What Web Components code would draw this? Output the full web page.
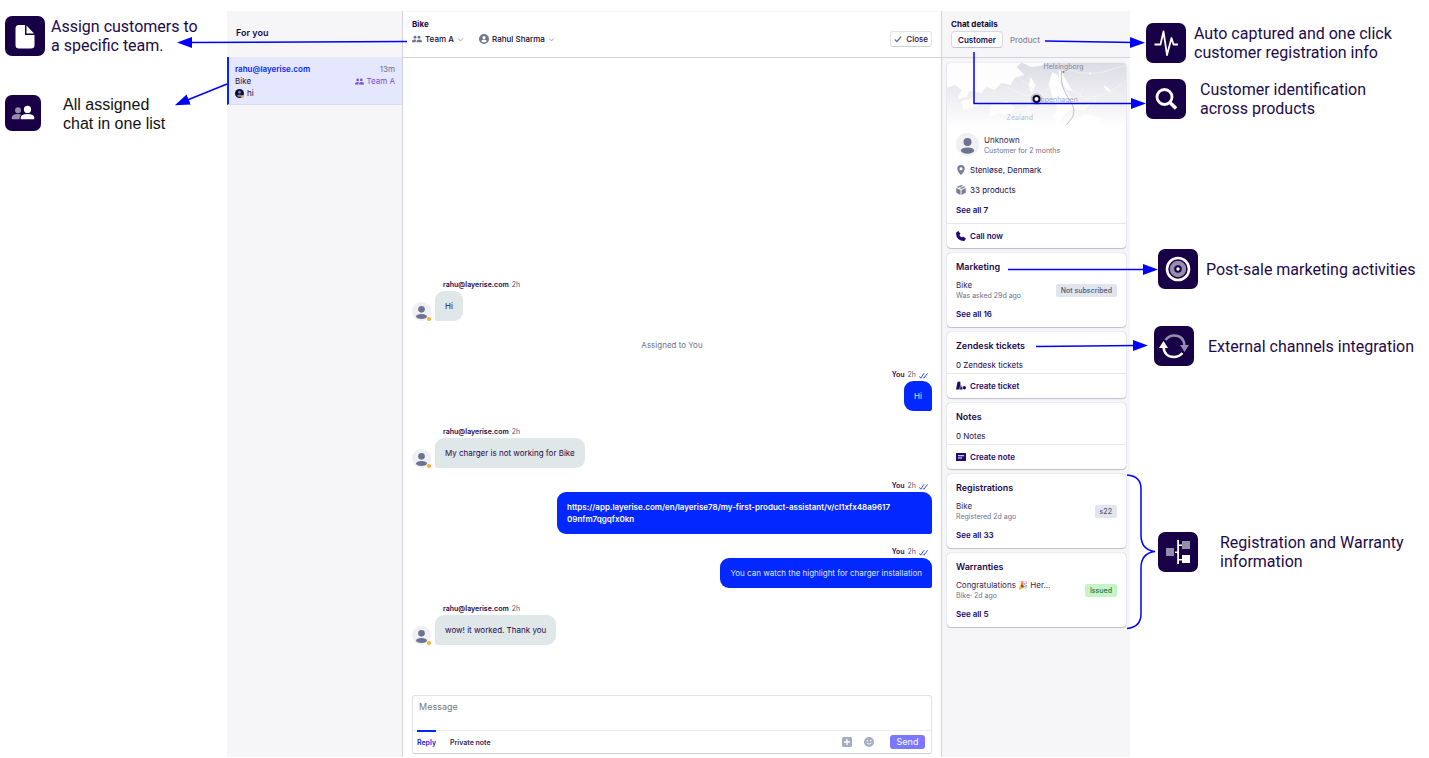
<!DOCTYPE html>
<html lang="en">
<head>
<meta charset="utf-8">
<meta name="viewport" content="width=device-width, initial-scale=1">
<title>Customer chat</title>
<style>
  :root {
    --ink: #1c0a4a;
    --muted: #6f7189;
    --blue: #0328ff;
    --arrow: #0000ff;
    --panel: #f6f6f9;
    --line: #d3d3da;
  }

  body {
    margin: 0;
    background: #fff;
    color: var(--ink);
    font: 8px/12px Inter, "Liberation Sans", sans-serif;
  }
</style>
</head>
<body>
<tour-page></tour-page>

<script>
const define = (name, html) => customElements.define(name, class extends HTMLElement {
  constructor() {
    super()
    this.attachShadow({ mode: 'open' })
    this.shadowRoot.innerHTML = typeof html === 'function' ? html(this) : html
  }
})

const attr = (el, name, fallback = '') => el.getAttribute(name) ?? fallback

const icons = {
  team: ['0 0 20 16', `<circle cx="6" cy="4.5" r="2.9"/><circle cx="14" cy="4.5" r="2.9"/><path d="M0 14.500v-2q0-3.500 6-3.500 1.500 0 2.600.3Q7.500 10.500 7.500 14.500zM9 14.500v-2q0-3.500 5.500-3.500t5.500 3.500v2z"/>`],
  user: ['0 0 20 20', `<path fill-rule="evenodd" d="M10 0a10 10 0 1 0 0 20 10 10 0 0 0 0-20zm0 4a3.200 3.200 0 1 1 0 6.400A3.200 3.200 0 0 1 10 4zm-5.500 10.500c0-4 11-4 11 0-2.500 3-8.500 3-11 0z"/>`],
  chevron: ['0 0 20 20', `<path d="M3 7l7 7 7-7" fill="none" stroke="currentColor" stroke-width="2.500"/>`],
  check: ['0 0 20 20', `<path d="M2 11l5 5L18 4" fill="none" stroke="currentColor" stroke-width="3.500"/>`],
  seen: ['0 0 20 16', `<path d="M1 10l3 4 7-11M9 12l2 2 8-11" fill="none" stroke="currentColor" stroke-width="1.800"/>`],
  pin: ['0 0 20 20', `<path fill-rule="evenodd" d="M10 0a7.500 7.500 0 0 0-7.500 7.500C2.500 13 10 20 10 20s7.500-7 7.500-12.500A7.500 7.500 0 0 0 10 0zm0 4.500a3 3 0 1 1 0 6 3 3 0 0 1 0-6z"/>`],
  box: ['0 0 20 20', `<path d="M10 0l4 1.600-9 4L1 4zM16 2.400L19 4l-9 4.200L7 6.700zM.5 6L9 9.800V20L.5 15.500zM19.500 6L11 9.800V20l8.500-4.500z"/>`],
  phone: ['0 0 20 20', `<path d="M1 2.500L5 0l4 6-2.200 2.200q1.500 3.500 5 5L14 11l6 4-2.500 4q-1 1-3 1Q1 18 0 5.500q0-2 1-3z"/>`],
  ticket: ['0 0 20 18', `<path d="M3 1q4-2 6 1L7 16H0z"/><path d="M9.500 5l3.500 11H8z"/><circle cx="16.500" cy="12.500" r="3.500"/>`],
  note: ['0 0 20 16', `<path fill-rule="evenodd" d="M1 0h18q1 0 1 1v14q0 1-1 1H1q-1 0-1-1V1q0-1 1-1zm3 4.500v2h12v-2zm0 4.500v2h8V9z"/>`],
  plus: ['0 0 20 20', `<path fill-rule="evenodd" d="M3 0h14q3 0 3 3v14q0 3-3 3H3q-3 0-3-3V3q0-3 3-3zm5.700 4v4.700H4v2.600h4.700V16h2.600v-4.700H16V8.700h-4.700V4z"/>`],
  smile: ['0 0 20 20', `<circle cx="10" cy="10" r="10"/><g fill="#fff"><circle cx="6.500" cy="7.500" r="1.500"/><circle cx="13.500" cy="7.500" r="1.500"/></g><path d="M5.500 12q4.500 5 9 0" fill="none" stroke="#fff" stroke-width="1.800"/>`],
  avatar: ['0 0 40 40', `<circle cx="20" cy="20" r="20" fill="#f0f0f3"/><g fill="#6c7390"><circle cx="20" cy="15.500" r="7"/><ellipse cx="20" cy="30.500" rx="11.500" ry="5.500"/></g>`],
  face: ['0 0 40 40', `<circle cx="20" cy="20" r="20" fill="#0d0d3a"/><g fill="#7d86a8"><circle cx="20" cy="14" r="6"/><path d="M9 31q0-7 11-7t11 7q-11 8-22 0z"/></g>`],
  // callout tiles
  file: ['0 0 40 40', `<path d="M14 9h6v10h9.500v10q0 3.500-3.500 3.500H14q-3.500 0-3.500-3.500V12.500Q10.500 9 14 9z"/><path d="M21.500 9.500L29 17.500h-7.500z"/>`],
  people: ['0 0 40 40', `<g opacity=".55"><circle cx="14.500" cy="17" r="3.300"/><path d="M7.500 27v-2q0-4 7-4 2 0 3.500.6-2 1.600-2 5.400z"/></g><circle cx="25" cy="16" r="4"/><path d="M17.500 27v-2q0-4 7.500-4t7.500 4v2z"/>`],
  pulse: ['0 0 40 40', `<path d="M8.500 21.500h6L17.500 8.500 21 32l4.500-17 2 6.500H32" fill="none" stroke="currentColor" stroke-width="1.800" stroke-linejoin="round"/>`],
  search: ['0 0 40 40', `<circle cx="18.500" cy="18" r="7.500" fill="none" stroke="currentColor" stroke-width="2.800"/><path d="M24 23.500l6 6" stroke="currentColor" stroke-width="3.500"/>`],
  target: ['0 0 40 40', `<circle cx="20" cy="20" r="11" fill="none" stroke="currentColor" stroke-width="2.600"/><circle cx="20" cy="20" r="6" fill="none" stroke="currentColor" stroke-width="4.500" opacity=".55"/><circle cx="20" cy="20" r="1.700"/>`],
  sync: ['0 0 40 40', `<g opacity=".55"><path d="M11.500 14Q15 9.500 20 9.500q9.500 0 10.500 10" fill="none" stroke="currentColor" stroke-width="2.500"/><path d="M26 19h9l-4.500 7z"/></g><path d="M28.500 27q-3.500 4-8.500 4-9.500 0-10.500-10" fill="none" stroke="currentColor" stroke-width="2.500"/><path d="M5 22h9l-4.500-7z"/>`],
  tree: ['0 0 40 40', `<path d="M19.200 8h1.800v24h-1.800z"/><path d="M17 19.500h3v1.600h-3zM21 12.500h3v1.600h-3zM21 27h3v1.600h-3z"/><path d="M24 23h8v8h-8z"/><path d="M24 9h8v8h-8zM8 16h8v8H8z" opacity=".55"/>`]
}

define('ui-icon', el => {
  const [viewBox, shapes] = icons[attr(el, 'name')]
  return `
<style>
  :host {
    display: inline-block;
    flex: none;
    width: var(--icon-size, 9px);
    height: var(--icon-size, 9px);
  }

  svg {
    display: block;
    width: 100%;
    height: 100%;
  }
</style>
<svg viewBox="${viewBox}" fill="currentColor" aria-hidden="true">${shapes}</svg>
`
})

define('user-avatar', el => `
<style>
  :host {
    position: relative;
    display: block;
    flex: none;
    --icon-size: var(--avatar-size, 19px);
  }

  ui-icon {
    display: block;
  }

  i {
    position: absolute;
    right: 0;
    bottom: 0;
    width: 4px;
    height: 4px;
    border-radius: 50%;
    background: #ffab2e;
  }

  :host([kind="face"]) i {
    width: 3px;
    height: 3px;
  }

  :host([plain]) i {
    display: none;
  }
</style>
<ui-icon name="${attr(el, 'kind', 'avatar')}"></ui-icon><i></i>
`)

define('help-callout', el => `
<style>
  :host {
    display: flex;
    align-items: flex-start;
    gap: var(--gap, 8px);
    margin-left: var(--indent, 0);
    color: #1e0a4a;
    font: 16px/19px Roboto, sans-serif;
  }

  .tile {
    flex: none;
    border-radius: 7px;
    background: #170046;
    color: #fff;
    --icon-size: var(--tile, 40px);
  }

  ui-icon {
    display: block;
  }

  p {
    margin: 0;
    align-self: center;
  }
</style>
<div class="tile"><ui-icon name="${attr(el, 'icon')}"></ui-icon></div>
<p><slot></slot></p>
`)

// Arrows between the callouts and the app; one drawing per side, pinned to that side
define('callout-arrows', el => `
<style>
  :host {
    position: absolute;
    top: 0;
    ${attr(el, 'side')}: 0;
    pointer-events: none;
  }

  svg {
    display: block;
  }
</style>
<svg width="500" height="700" fill="none" stroke="var(--arrow)" stroke-width="1.500" aria-hidden="true">
  <marker id="head" markerWidth="15" markerHeight="12" refX="4" refY="6" orient="auto" markerUnits="userSpaceOnUse">
    <path d="M0 0.500L15 6 0 11.500z" fill="var(--arrow)" stroke="none"/>
  </marker>
  ${attr(el, 'side') === 'left' ? `
  <path d="M407 41.500L188 42.500" marker-end="url(#head)"/>
  <path d="M227 84L185 101" marker-end="url(#head)"/>` : `
  <path d="M116 41L205 42.500" marker-end="url(#head)"/>
  <path d="M45 52V103.500H206" marker-end="url(#head)"/>
  <path d="M79 269.500H218" marker-end="url(#head)"/>
  <path d="M107 346.500L208 345.500" marker-end="url(#head)"/>
  <path d="M198 475Q212 476 212 489V535Q212 550 226 551.500Q212 553 212 568V614Q212 627 198 628.500"/>`}
</svg>
`)

define('inbox-item', el => `
<style>
  :host {
    display: block;
    padding: 6px 7px 5px 6px;
    border-left: 2px solid var(--blue);
    border-bottom: 1px solid #d9dbf3;
    background: #e5e7ff;
  }

  div {
    display: flex;
    align-items: center;
    justify-content: space-between;
  }

  b {
    color: var(--blue);
    font-weight: 600;
  }

  time {
    color: var(--muted);
  }

  .team {
    display: flex;
    align-items: center;
    gap: 2px;
    color: #7b4fd6;
  }

  .last {
    justify-content: flex-start;
    gap: 3px;
    --avatar-size: 9px;
  }
</style>
<div><b>${attr(el, 'from')}</b><time>${attr(el, 'time')}</time></div>
<div><span>${attr(el, 'subject')}</span><span class="team"><ui-icon name="team"></ui-icon>${attr(el, 'team')}</span></div>
<div class="last"><user-avatar kind="face"></user-avatar><slot></slot></div>
`)

define('inbox-panel', `
<style>
  :host {
    display: block;
    background: var(--panel);
    border-right: 1px solid var(--line);
  }

  h2 {
    box-sizing: border-box;
    height: 46px;
    margin: 0;
    padding: 15px 9px 0;
    font-size: 9px;
    line-height: 13px;
    font-weight: 600;
  }
</style>
<h2>For you</h2>
<slot></slot>
`)

define('picker-select', el => `
<style>
  :host {
    display: flex;
    align-items: center;
    gap: 3px;
    color: #6f7590;
    --icon-size: 10px;
  }

  label {
    display: flex;
  }

  select {
    appearance: none;
    padding: 0;
    border: 0;
    background: none;
    color: #14082e;
    font: inherit;
    font-weight: 500;
    cursor: pointer;
  }

  select + ui-icon {
    --icon-size: 7px;
    color: #8e90a3;
    pointer-events: none;
  }
</style>
<label for="pick"><ui-icon name="${attr(el, 'icon')}"></ui-icon></label>
<select id="pick" aria-label="${attr(el, 'label')}"><option>${attr(el, 'value')}</option></select>
<ui-icon name="chevron"></ui-icon>
`)

define('chat-message', el => {
  const mine = el.hasAttribute('mine')
  return `
<style>
  :host {
    display: flex;
    align-items: flex-end;
    gap: 4px;
    margin-top: 3px;
  }

  :host([mine]) {
    justify-content: flex-end;
    margin-top: 0;
  }

  .meta {
    display: flex;
    align-items: center;
    gap: 3px;
    padding: 0 8px;
    color: #55556f;
    font-size: 7px;
  }

  .meta b {
    color: var(--ink);
    font-weight: 600;
  }

  .meta ui-icon {
    color: var(--blue);
  }

  .bubble {
    width: fit-content;
    box-sizing: border-box;
    max-width: 375px;
    padding: 9px 10px;
    border-radius: 9px 9px 9px 2px;
    background: #e0e7e9;
    overflow-wrap: anywhere;
  }

  :host([mine]) .meta {
    justify-content: flex-end;
    padding: 0 4px;
  }

  :host([mine]) .bubble {
    margin-left: auto;
    border-radius: 9px 9px 2px 9px;
    background: var(--blue);
    color: #dfe4ff;
  }

  :host([full]) .bubble {
    width: 375px;
    word-break: break-all;
  }

  ::slotted(a) {
    color: #fff;
    font-weight: 600;
    text-decoration: none;
  }
</style>
${mine ? '' : '<user-avatar></user-avatar>'}
<div>
  <div class="meta"><b>${attr(el, 'from')}</b><span>2h</span>${mine ? '<ui-icon name="seen"></ui-icon>' : ''}</div>
  <div class="bubble"><slot></slot></div>
</div>
`
})

define('message-composer', `
<style>
  :host {
    display: block;
    margin: 0 9px 3px;
    border: 1px solid #e2e2e8;
    border-bottom-color: #cfcfd6;
    border-radius: 3px;
  }

  textarea {
    display: block;
    box-sizing: border-box;
    width: 100%;
    height: 34px;
    padding: 5px 6px;
    border: 0;
    outline: 0;
    background: none;
    resize: none;
    color: var(--ink);
    font: inherit;
    font-size: 9px;
  }

  textarea::placeholder {
    color: #77777f;
  }

  footer {
    display: flex;
    align-items: center;
    height: 22px;
    padding: 0 6px 0 4px;
    border-top: 1px solid #ededf1;
  }

  button {
    padding: 0;
    border: 0;
    background: none;
    color: #33264f;
    font: inherit;
    font-size: 7px;
    font-weight: 600;
    cursor: pointer;
  }

  .tab {
    align-self: stretch;
    margin: -1px 14px 0 0;
    border-top: 2px solid transparent;
  }

  .active {
    border-color: var(--blue);
    color: #1a1ad8;
  }

  .tool {
    display: flex;
    margin-right: 12px;
    color: #a5adbf;
    --icon-size: 10px;
  }

  .spacer {
    flex: 1;
  }

  .send {
    width: 35px;
    height: 14px;
    margin-left: 4px;
    border-radius: 3px;
    background: #7b78ff;
    color: #fff;
    font-size: 9px;
    font-weight: 400;
  }
</style>
<textarea aria-label="Message" placeholder="Message"></textarea>
<footer>
  <button class="tab active">Reply</button>
  <button class="tab">Private note</button>
  <span class="spacer"></span>
  <button class="tool" aria-label="Attach"><ui-icon name="plus"></ui-icon></button>
  <button class="tool" aria-label="Emoji"><ui-icon name="smile"></ui-icon></button>
  <button class="send">Send</button>
</footer>
`)

define('chat-panel', `
<style>
  :host {
    display: flex;
    flex-direction: column;
    min-width: 0;
    border-right: 1px solid var(--line);
  }

  header {
    box-sizing: border-box;
    display: flex;
    align-items: flex-start;
    justify-content: space-between;
    height: 47px;
    padding: 6px 9px 0;
    border-top: 1px solid #f6f6f9;
    border-bottom: 1px solid var(--line);
  }

  h1 {
    margin: 0 0 2px;
    font-size: 8px;
    line-height: 13px;
    font-weight: 700;
  }

  .pickers {
    display: flex;
    gap: 15px;
  }

  button {
    display: flex;
    align-items: center;
    gap: 4px;
    height: 16px;
    margin-top: 13px;
    padding: 0 3px;
    border: 1px solid #e2e2e8;
    border-bottom-color: #cfcfd6;
    border-radius: 3px;
    background: #fff;
    color: var(--ink);
    font: inherit;
    font-weight: 500;
    cursor: pointer;
  }

  button ui-icon {
    --icon-size: 8px;
    color: #6f7590;
  }

  main {
    flex: 1;
    display: flex;
    flex-direction: column;
    justify-content: flex-end;
    gap: 12px;
    padding: 9px 9px 50px;
  }
</style>
<header>
  <div>
    <h1>Bike</h1>
    <div class="pickers">
      <picker-select icon="team" label="Team" value="Team A"></picker-select>
      <picker-select icon="user" label="Assignee" value="Rahul Sharma"></picker-select>
    </div>
  </div>
  <button><ui-icon name="check"></ui-icon>Close</button>
</header>
<main><slot></slot></main>
<message-composer></message-composer>
`)

define('chat-event', `
<style>
  :host {
    display: block;
    color: var(--muted);
    line-height: 24px;
    text-align: center;
  }
</style>
<slot></slot>
`)

define('status-badge', `
<style>
  :host {
    padding: 0 5px;
    border-radius: 2px;
    background: #e0e5ee;
    color: #55586f;
    font-size: 7px;
    font-weight: 500;
    line-height: 13px;
    white-space: nowrap;
  }

  :host([tone="good"]) {
    background: #c4f5c6;
    color: #25704a;
  }
</style>
<slot></slot>
`)

define('card-entry', el => `
<style>
  :host {
    display: flex;
    align-items: center;
    gap: 5px;
    color: #33264f;
  }

  div {
    flex: 1;
    min-width: 0;
  }

  p {
    margin: 0;
    line-height: 11px;
  }

  small {
    display: block;
    color: var(--muted);
    font-size: 7px;
    line-height: 9px;
  }
</style>
<slot name="lead"></slot>
<div><p>${attr(el, 'heading')}</p><small>${attr(el, 'detail')}</small></div>
<slot></slot>
`)

define('info-card', el => {
  const heading = attr(el, 'heading')
  const more = attr(el, 'more')
  const action = attr(el, 'action')
  return `
<style>
  :host {
    display: block;
    overflow: hidden;
    border-radius: 4px;
    background: #fff;
    box-shadow: 0 0 1px #9a9aac, 0 1px 1px #c4c4cf;
  }

  .body {
    padding: 8px 9px ${more ? 7 : 2}px;
  }

  h3 {
    margin: 0 0 7px;
    font-size: 9px;
    line-height: 12px;
    font-weight: 600;
  }

  a {
    display: table;
    margin-top: 8px;
    color: #22096e;
    font-weight: 600;
    text-decoration: none;
  }

  button {
    display: flex;
    align-items: center;
    gap: 4px;
    width: 100%;
    height: 25px;
    padding: 0 9px;
    border: 0;
    border-top: 1px solid #e6e6ec;
    background: none;
    color: #22096e;
    font: inherit;
    font-weight: 600;
    cursor: pointer;
  }

  button ui-icon {
    --icon-size: 10px;
  }
</style>
<slot name="media"></slot>
<div class="body">
  ${heading ? `<h3>${heading}</h3>` : ''}
  <slot></slot>
  ${more ? `<a href="#">${more}</a>` : ''}
</div>
${action ? `<button><ui-icon name="${attr(el, 'icon')}"></ui-icon>${action}</button>` : ''}
`
})

define('info-line', el => `
<style>
  :host {
    display: flex;
    align-items: center;
    gap: 4px;
    margin-top: 8px;
    --icon-size: 10px;
  }

  ui-icon {
    color: #7b8096;
  }
</style>
<ui-icon name="${attr(el, 'icon')}"></ui-icon><slot></slot>
`)

define('area-map', `
<style>
  :host {
    display: block;
    height: 62px;
    overflow: hidden;
  }

  svg {
    display: block;
    width: 100%;
    height: 72px;
  }

  text {
    fill: #8286a0;
    font-size: 7px;
  }
</style>
<svg viewBox="0 0 180 72" preserveAspectRatio="xMidYMid slice" role="img" aria-label="Map">
  <defs>
    <linearGradient id="fade" x2="0" y2="1">
      <stop offset="0" stop-color="#fff" stop-opacity="0"/>
      <stop offset=".9" stop-color="#fff"/>
    </linearGradient>
  </defs>
  <path fill="#dcdce5" d="M0 0h180v72H0z"/>
  <g fill="#fdfdfe">
    <path d="M0 0h75l-5 4 8 8-10 3-4 7-9-2-7 7-8-3-5 6-12-2-3 6-9 2 4-9-6-5-9 3z"/>
    <path d="M76 0h24l-6 3-9 1zM84 14l5 8-4 8-3-7zM44 42l16-4 8 6-6 9-9-3-10 4z"/>
    <path d="M106 9l5 3 4 10 6 8 5 7 11 5 8-2-8 8-10-2-7 3-9 12-5-7 5-8-5-12-4-13z"/>
    <path d="M112 7l3 2 8 14 3 5-6-1-7-10zM126 58l12-7 14 3 6 8-4 10h-33zM64 57l9-6 8 7-6 9-14 5z"/>
    <path d="M157 22l5 3 4 5-7-3zM141 10l4-1-1 3zM15 38l13-3 4 8-15 4z"/>
  </g>
  <g fill="none" stroke="#ebebf1" stroke-width="1">
    <path d="M60 24l19 9 14-3 12 8M74 15l15 14M93 30l-9 14-20 6M104 24l-14 8M76 38l13 9 14-2M82 35l-1 25M126 28l15 8 23-7 16-12M150 33l-8 19M116 4l17 6 20 0 27-8M136 24l-5 22"/>
  </g>
  <path fill="url(#fade)" d="M0 0h180v72H0z"/>
  <path d="M115 8q-1 12 3 20t8 14q4 9-3 16t-8 14" fill="none" stroke="#a4a6be" opacity=".7"/>
  <circle cx="117" cy="9" r="1" fill="#777b96"/>
  <circle cx="90" cy="36" r="6" fill="#85859e" opacity=".35"/>
  <text x="97" y="6">Helsingborg</text>
  <text x="94" y="39" opacity=".7">openhagen</text>
  <text x="60" y="57" opacity=".55" font-size="6">Zealand</text>
  <circle cx="90" cy="36" r="3" fill="#fff" stroke="#0f0830" stroke-width="2"/>
</svg>
`)

define('details-panel', `
<style>
  :host {
    display: block;
    min-width: 0;
    background: var(--panel);
  }

  header {
    box-sizing: border-box;
    height: 47px;
    padding: 7px 9px 0;
    border-bottom: 1px solid var(--line);
  }

  h2 {
    margin: 0;
    color: #14082e;
    font-size: 8px;
    line-height: 13px;
    font-weight: 700;
  }

  nav {
    display: flex;
  }

  button {
    height: 17px;
    padding: 0 6px;
    border: 1px solid transparent;
    border-radius: 4px;
    background: none;
    color: #85879b;
    font: inherit;
    font-weight: 500;
    cursor: pointer;
  }

  .active {
    border-color: #dadae2;
    border-bottom-color: #c4c4cf;
    background: #fff;
    color: var(--ink);
    font-weight: 600;
  }

  .cards {
    display: flex;
    flex-direction: column;
    gap: 5px;
    padding: 5px 4px 5px 5px;
  }
</style>
<header>
  <h2>Chat details</h2>
  <nav>
    <button class="active">Customer</button>
    <button>Product</button>
  </nav>
</header>
<div class="cards"><slot></slot></div>
`)

define('tour-page', `
<style>
  :host {
    position: relative;
    display: grid;
    grid-template-columns: 227px minmax(0, 1fr) 299px;
    min-height: 100vh;
  }

  aside {
    display: grid;
    align-content: start;
    align-items: start;
  }

  .left {
    grid-template-rows: 79px auto;
    padding: 16px 0 0 5px;
  }

  .right {
    grid-template-rows: 56px 170px 77px 206px auto;
    padding-top: 23px;
  }

  .app {
    display: grid;
    grid-template-columns: 176px minmax(0, 1fr) 188px;
    margin: 11px 0 1px;
  }

  .near { --indent: 16px; }
  .mid { --indent: 24px; }
  .far { --indent: 28px; }
  .snug { --gap: 6px; }
  .wide { --gap: 14px; }
  .wider { --gap: 22px; }

  .plain {
    --tile: 36px;
    color: #111;
    font-family: "Liberation Sans", sans-serif;
  }
</style>
<aside class="left">
  <help-callout icon="file" class="snug">Assign customers to<br>a specific team.</help-callout>
  <help-callout icon="people" class="plain wider">All assigned<br>chat in one list</help-callout>
</aside>
<div class="app">
  <inbox-panel>
    <inbox-item from="rahu@layerise.com" time="13m" subject="Bike" team="Team A">hi</inbox-item>
  </inbox-panel>
  <chat-panel>
    <chat-message from="rahu@layerise.com">Hi</chat-message>
    <chat-event>Assigned to You</chat-event>
    <chat-message mine from="You">Hi</chat-message>
    <chat-message from="rahu@layerise.com">My charger is not working for Bike</chat-message>
    <chat-message mine full from="You"><a href="#">https://app.layerise.com/en/layerise78/my-first-product-assistant/v/cl1xfx48a9617<br>09nfm7qgqfx0kn</a></chat-message>
    <chat-message mine from="You">You can watch the highlight for charger installation</chat-message>
    <chat-message from="rahu@layerise.com">wow! it worked. Thank you</chat-message>
  </chat-panel>
  <details-panel>
    <info-card more="See all 7" action="Call now" icon="phone">
      <area-map slot="media"></area-map>
      <card-entry heading="Unknown" detail="Customer for 2 months">
        <user-avatar slot="lead" plain style="--avatar-size: 23px"></user-avatar>
      </card-entry>
      <info-line icon="pin">Stenløse, Denmark</info-line>
      <info-line icon="box">33 products</info-line>
    </info-card>
    <info-card heading="Marketing" more="See all 16">
      <card-entry heading="Bike" detail="Was asked 29d ago"><status-badge>Not subscribed</status-badge></card-entry>
    </info-card>
    <info-card heading="Zendesk tickets" action="Create ticket" icon="ticket">0 Zendesk tickets</info-card>
    <info-card heading="Notes" action="Create note" icon="note">0 Notes</info-card>
    <info-card heading="Registrations" more="See all 33">
      <card-entry heading="Bike" detail="Registered 2d ago"><status-badge>s22</status-badge></card-entry>
    </info-card>
    <info-card heading="Warranties" more="See all 5">
      <card-entry heading="Congratulations 🎉 Her…" detail="Bike· 2d ago"><status-badge tone="good">Issued</status-badge></card-entry>
    </info-card>
  </details-panel>
</div>
<aside class="right">
  <help-callout icon="pulse" class="near">Auto captured and one click<br>customer registration info</help-callout>
  <help-callout icon="search" class="near wide">Customer identification<br>across products</help-callout>
  <help-callout icon="target" class="far">Post-sale marketing activities</help-callout>
  <help-callout icon="sync" class="mid wide">External channels integration</help-callout>
  <help-callout icon="tree" class="far wider">Registration and Warranty<br>information</help-callout>
</aside>
<callout-arrows side="left"></callout-arrows>
<callout-arrows side="right"></callout-arrows>
`)
</script>
</body>
</html>
